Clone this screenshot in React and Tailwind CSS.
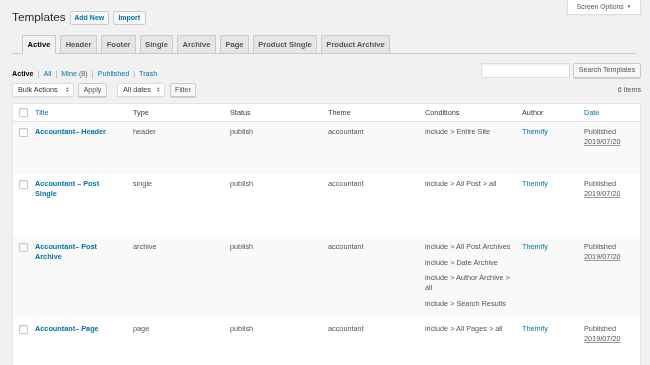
import React from 'react';

const tabs = [
  { label: 'Active', w: 'w-[34px]', active: true },
  { label: 'Header', w: 'w-[37px]' },
  { label: 'Footer', w: 'w-[35px]' },
  { label: 'Single', w: 'w-[33px]' },
  { label: 'Archive', w: 'w-[39px]' },
  { label: 'Page', w: 'w-[29px]' },
  { label: 'Product Single', w: 'w-[64px]' },
  { label: 'Product Archive', w: 'w-[69px]' },
];

const rows = [
  { title: 'Accountant– Header', type: 'header', conds: ['include > Entire Site'], h: 'h-[52px]', bg: 'bg-[#f9f9f9]' },
  { title: 'Accountant – Post Single', type: 'single', conds: ['include > All Post > all'], h: 'h-[63px]', bg: 'bg-white' },
  {
    title: 'Accountant– Post Archive',
    type: 'archive',
    conds: ['include > All Post Archives', 'include > Date Archive', 'include > Author Archive > all', 'include > Search Results'],
    h: 'h-[82px]',
    bg: 'bg-[#f9f9f9]',
  },
  { title: 'Accountant– Page', type: 'page', conds: ['include > All Pages > all'], h: 'h-[60px]', bg: 'bg-white' },
];

const cols = 'grid grid-cols-[22px_98px_97px_98px_97px_97px_62px_58px]';

function Checkbox() {
  return <span className="block w-[9px] h-[9px] ml-[6px] bg-white border border-[#c4c8cc] rounded-[1px] shadow-[inset_0_1px_1px_rgba(0,0,0,0.08)]" />;
}

function Select({ label, w }) {
  return (
    <div className={`${w} h-[14px] flex items-center justify-between pl-[5px] pr-[4px] bg-white border border-[#ddd] rounded-[2px] text-[#32373c] text-[7.3px] shadow-[0_1px_1px_rgba(0,0,0,0.05)]`}>
      <span>{label}</span>
      <span className="flex flex-col leading-none text-[3.5px] text-[#555]">
        <span>▲</span>
        <span>▼</span>
      </span>
    </div>
  );
}

function Btn({ label, w }) {
  return (
    <div className={`${w} h-[14px] flex items-center justify-center bg-[#f7f7f7] border border-[#ccc] rounded-[2px] text-[#555] text-[7.1px] shadow-[0_1px_0_#ccc]`}>
      {label}
    </div>
  );
}

function Sep() {
  return <span className="text-[#a0a5aa] mx-[2px]"> | </span>;
}

export default function App() {
  return (
    <div className="w-[650px] h-[365px] overflow-hidden bg-[#f1f1f1] font-['Liberation_Sans',Arial,sans-serif] text-[#555] antialiased [will-change:transform]">
      <div className="flex items-start justify-between pl-[12px] pr-[9px]">
        <div className="flex items-center pt-[11px] h-[25px]">
          <h1 className="text-[11.8px] text-[#23282d] leading-none mr-[4px]">Templates</h1>
          <div className="w-[39px] h-[14px] flex items-center justify-center bg-[#f7f7f7] border border-[#ccc] rounded-[2px] text-[#0073aa] text-[7px] font-semibold">Add New</div>
          <div className="w-[33px] h-[14px] ml-[4px] flex items-center justify-center bg-[#f7f7f7] border border-[#ccc] rounded-[2px] text-[#0073aa] text-[7px] font-semibold">Import</div>
        </div>
        <div className="w-[74px] h-[15px] flex items-center justify-center gap-[3px] bg-white border border-t-0 border-[#ddd] text-[#555] text-[6.8px] shadow-[0_0_0_1px_rgba(0,0,0,0.02)]">
          <span>Screen Options</span>
          <span className="text-[4.5px]">▼</span>
        </div>
      </div>

      <div className="mt-[10px] ml-[12px] mr-[14px] pl-[10px] flex items-end gap-[4px] border-b border-[#ccc]">
        {tabs.map(t => (
          <div
            key={t.label}
            className={`${t.w} flex items-center justify-center border border-b-0 border-[#ccc] text-[7.6px] font-bold ${
              t.active ? 'h-[19px] -mb-px bg-[#f1f1f1] text-black' : 'h-[18px] bg-[#e5e5e5] text-[#555]'
            }`}
          >
            {t.label}
          </div>
        ))}
      </div>

      <div className="mt-[9px] flex items-start justify-between pl-[12px] pr-[9px] h-[15px]">
        <div className="pt-[6px] text-[7.2px] leading-[10px]">
          <span className="font-bold text-black">Active</span>
          <Sep />
          <span className="text-[#0073aa]">All</span>
          <Sep />
          <span className="text-[#0073aa]">Mine</span> <span className="text-[#555]">(8)</span>
          <Sep />
          <span className="text-[#0073aa]">Published</span>
          <Sep />
          <span className="text-[#0073aa]">Trash</span>
        </div>
        <div className="flex items-center gap-[3px]">
          <div className="w-[89px] h-[15px] bg-white border border-[#ddd] rounded-[1px] shadow-[inset_0_1px_2px_rgba(0,0,0,0.07)]" />
          <div className="w-[68px] h-[15px] flex items-center justify-center bg-[#f7f7f7] border border-[#ccc] rounded-[2px] text-[#555] text-[7.1px] shadow-[0_1px_0_#ccc]">Search Templates</div>
        </div>
      </div>

      <div className="mt-[5px] flex items-center justify-between pl-[12px] pr-[9px] h-[14px]">
        <div className="flex items-center">
          <Select label="Bulk Actions" w="w-[62px]" />
          <div className="ml-[4px]"><Btn label="Apply" w="w-[29px]" /></div>
          <div className="ml-[10px]"><Select label="All dates" w="w-[48px]" /></div>
          <div className="ml-[5px]"><Btn label="Filter" w="w-[26px]" /></div>
        </div>
        <span className="text-[7.2px] text-[#555] pt-[1px]">6 items</span>
      </div>

      <div className="mt-[6px] ml-[12px] w-[629px] bg-white border border-[#e5e5e5] shadow-[0_1px_1px_rgba(0,0,0,0.04)] text-[7.3px] leading-[10px]">
        <div className={`${cols} h-[18px] items-center border-b border-[#e1e1e1] text-[#32373c]`}>
          <Checkbox />
          <span className="text-[#0073aa]">Title</span>
          <span>Type</span>
          <span>Status</span>
          <span>Theme</span>
          <span>Conditions</span>
          <span>Author</span>
          <span className="text-[#0073aa]">Date</span>
        </div>
        {rows.map(r => (
          <div key={r.title} className={`${cols} ${r.h} ${r.bg} items-start pt-[5px]`}>
            <div className="pt-[1px]"><Checkbox /></div>
            <span className="pr-[18px] font-bold text-[#0073aa]">{r.title}</span>
            <span>{r.type}</span>
            <span>publish</span>
            <span>accountant</span>
            <div className="pr-[7px] flex flex-col gap-[5.5px]">
              {r.conds.map(c => (
                <span key={c}>{c}</span>
              ))}
            </div>
            <span className="text-[#0073aa]">Themify</span>
            <div className="flex flex-col">
              <span>Published</span>
              <span className="underline decoration-[#999] underline-offset-[1px]">2019/07/20</span>
            </div>
          </div>
        ))}
      </div>
    </div>
  );
}
